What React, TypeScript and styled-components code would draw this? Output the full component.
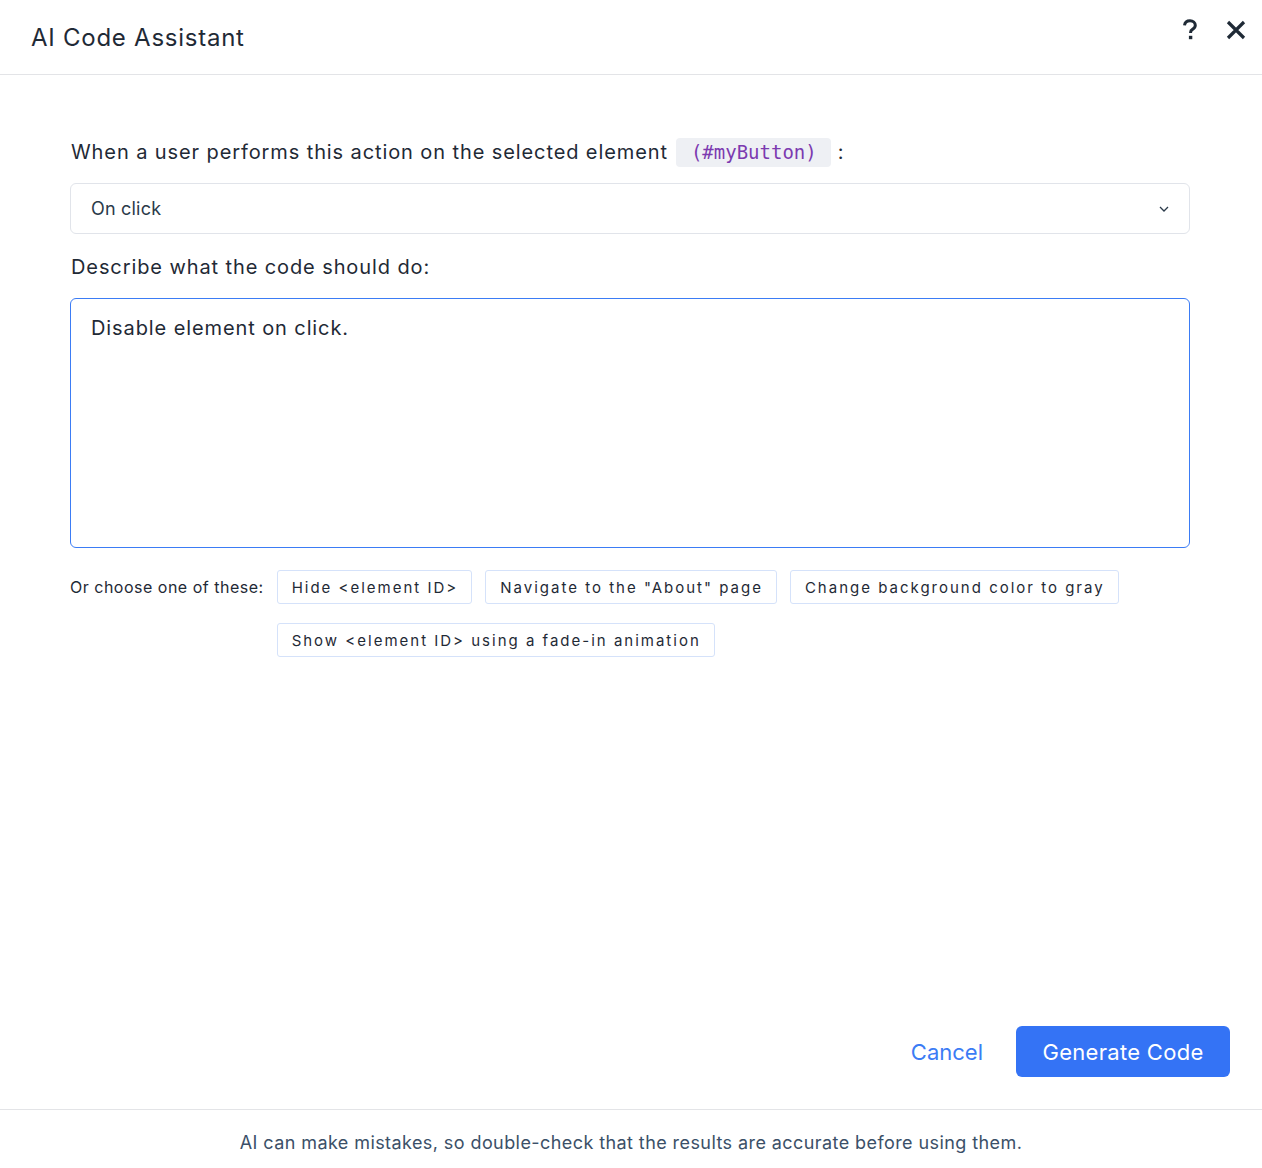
import React from 'react';
import styled, { createGlobalStyle } from 'styled-components';

const GlobalStyle = createGlobalStyle`
  html, body {
    margin: 0;
    padding: 0;
    background: #ffffff;
  }
  body {
    font-family: Inter, "Open Sans", "Liberation Sans", sans-serif;
    color: #1f2a36;
  }
`;

const suggestions = [
  'Hide <element ID>',
  'Navigate to the "About" page',
  'Change background color to gray',
  'Show <element ID> using a fade-in animation',
];

const App: React.FC = () => (
  <Page>
    <GlobalStyle />
    <Header>
      <Title>AI Code Assistant</Title>
      <HeaderActions>
        <IconButton aria-label="Help">
          <svg width="16" height="22" viewBox="0 0 16 22" fill="none">
            <path
              d="M2.5 6.4C2.9 3.6 5 1.8 8 1.8c3.1 0 5.3 1.9 5.3 4.5 0 2-1.1 3.1-2.8 4.1-1.4.8-1.9 1.4-1.9 2.8v.9"
              stroke="#1f2a36"
              strokeWidth="3"
            />
            <rect x="6.9" y="16.8" width="3.4" height="3.4" fill="#1f2a36" />
          </svg>
        </IconButton>
        <IconButton aria-label="Close">
          <svg width="20" height="20" viewBox="0 0 20 20">
            <path d="M2 2L18 18M18 2L2 18" stroke="#1f2a36" strokeWidth="3.2" />
          </svg>
        </IconButton>
      </HeaderActions>
    </Header>

    <Main>
      <Label>
        When a user performs this action on the selected element
        <CodeChip>(#myButton)</CodeChip>
        <span>:</span>
      </Label>
      <Select>
        <span>On click</span>
        <svg width="10" height="6" viewBox="0 0 10 6">
          <path d="M1 1l4 4 4-4" stroke="#2b3a4a" strokeWidth="1.3" fill="none" />
        </svg>
      </Select>

      <Label>Describe what the code should do:</Label>
      <TextArea defaultValue="Disable element on click." />

      <SuggestionRow>
        <SuggestionLabel>Or choose one of these:</SuggestionLabel>
        <ChipList>
          {suggestions.map((s) => (
            <Chip key={s}>{s}</Chip>
          ))}
        </ChipList>
      </SuggestionRow>
    </Main>

    <Actions>
      <TextButton>Cancel</TextButton>
      <PrimaryButton>Generate Code</PrimaryButton>
    </Actions>

    <Footer>AI can make mistakes, so double-check that the results are accurate before using them.</Footer>
  </Page>
);

export default App;

const Page = styled.div`
  display: flex;
  flex-direction: column;
  height: 1168px;
  width: 1262px;
`;

const Header = styled.header`
  height: 75px;
  box-sizing: border-box;
  border-bottom: 1px solid #e3e4e7;
  display: flex;
  align-items: center;
  justify-content: space-between;
  padding: 0 9px 0 31px;
`;

const Title = styled.h1`
  margin: 0;
  font-size: 24px;
  font-weight: 400;
  color: #1f2a36;
  letter-spacing: 0.75px;
`;

const HeaderActions = styled.div`
  display: flex;
  align-items: center;
  gap: 12px;
  margin-top: -14px;
`;

const IconButton = styled.button`
  border: none;
  background: none;
  padding: 0;
  width: 34px;
  height: 30px;
  display: flex;
  align-items: center;
  justify-content: center;
  cursor: pointer;
`;

const Main = styled.main`
  flex: 1;
  display: flex;
  flex-direction: column;
  padding: 62px 72px 0 70px;
`;

const Label = styled.div`
  display: flex;
  align-items: center;
  gap: 7px;
  font-size: 20px;
  letter-spacing: 0.9px;
  color: #1f2a36;
  margin-bottom: 16px;
  margin-left: 1px;
  line-height: 30px;
`;

const CodeChip = styled.code`
  background: #eef0f4;
  color: #7c3ab0;
  font-family: "DejaVu Sans Mono", "Liberation Mono", monospace;
  font-size: 19px;
  letter-spacing: 0;
  padding: 2px 14px 2px 15px;
  margin-left: 1px;
  border-radius: 4px;
  line-height: 25px;
`;

const Select = styled.div`
  height: 51px;
  box-sizing: border-box;
  border: 1px solid #e1e4ea;
  border-radius: 6px;
  display: flex;
  align-items: center;
  justify-content: space-between;
  padding: 0 20px 0 20px;
  font-size: 18px;
  letter-spacing: 0.2px;
  color: #2b3a4a;
  margin-bottom: 18px;
`;

const TextArea = styled.textarea`
  height: 250px;
  box-sizing: border-box;
  border: 1px solid #3b7cf5;
  border-radius: 6px;
  padding: 17px 20px;
  font-family: inherit;
  font-size: 20px;
  letter-spacing: 0.9px;
  color: #1f2a36;
  resize: none;
  outline: none;
  margin-bottom: 22px;
`;

const SuggestionRow = styled.div`
  display: flex;
  align-items: flex-start;
  gap: 13px;
`;

const SuggestionLabel = styled.span`
  font-size: 16px;
  letter-spacing: 0.5px;
  color: #1f2a36;
  line-height: 34px;
  white-space: nowrap;
`;

const ChipList = styled.div`
  display: flex;
  flex-wrap: wrap;
  column-gap: 13px;
  row-gap: 19px;
  max-width: 860px;
`;

const Chip = styled.button`
  height: 34px;
  box-sizing: border-box;
  border: 1px solid #d5e2fa;
  border-radius: 3px;
  background: #fff;
  padding: 0 13px 0 14px;
  font-family: inherit;
  font-size: 15px;
  letter-spacing: 2px;
  color: #1f2a36;
  cursor: pointer;
`;

const Actions = styled.div`
  display: flex;
  justify-content: flex-end;
  align-items: center;
  gap: 33px;
  padding: 0 32px 32px 0;
`;

const TextButton = styled.button`
  border: none;
  background: none;
  color: #3b7cf5;
  font-family: inherit;
  font-size: 22px;
  padding: 0;
  cursor: pointer;
`;

const PrimaryButton = styled.button`
  height: 51px;
  width: 214px;
  border: none;
  border-radius: 6px;
  background: #3473f5;
  color: #fff;
  font-family: inherit;
  font-size: 22px;
  letter-spacing: 0.3px;
  cursor: pointer;
`;

const Footer = styled.footer`
  border-top: 1px solid #e3e4e7;
  height: 59px;
  box-sizing: border-box;
  display: flex;
  align-items: center;
  justify-content: center;
  padding-top: 6px;
  font-size: 18px;
  letter-spacing: 0.42px;
  color: #3b5068;
`;
